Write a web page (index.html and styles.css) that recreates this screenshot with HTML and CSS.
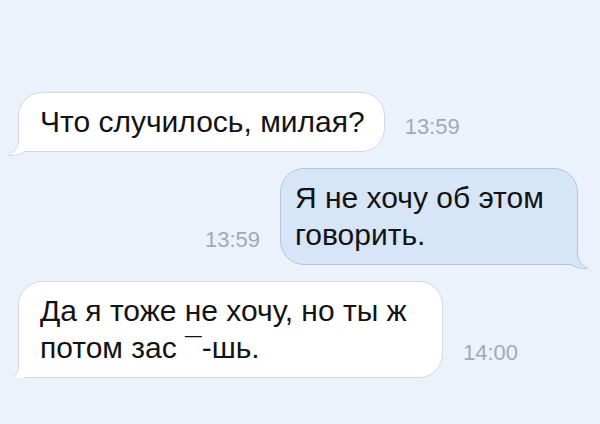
FILE: index.html
```html
<!DOCTYPE html>
<html lang="ru">

<head>
  <meta charset="UTF-8">
  <meta name="viewport" content="width=device-width, initial-scale=1.0">
  <title>Сообщения</title>
  <link rel="stylesheet" href="styles.css">
</head>

<body>
  <main class="chat">
    <div class="row">
      <div class="bubble bubble-in">
        Что случилось, милая?
        <svg class="tail" width="30" height="24" viewBox="0 0 30 24">
          <path class="tail-fill" d="M11.5 0 L11.5 8 C11.5 14 7 19 1.5 22.5 C8 23 14 21.5 18 18.5 L30 18.5 L30 0 Z" />
          <path class="tail-line" d="M11.5 0 L11.5 8 C11.5 14 7 19 1.5 22.5 C8 23 14 21.5 18 18.5 L30 18.5" />
        </svg>
      </div>
      <span class="time">13:59</span>
    </div>

    <div class="row row-out">
      <span class="time">13:59</span>
      <div class="bubble bubble-out">
        Я не хочу об этом говорить.
        <svg class="tail" width="30" height="24" viewBox="0 0 30 24">
          <path class="tail-fill" d="M11.5 0 L11.5 8 C11.5 14 7 19 1.5 22.5 C8 23 14 21.5 18 18.5 L30 18.5 L30 0 Z" />
          <path class="tail-line" d="M11.5 0 L11.5 8 C11.5 14 7 19 1.5 22.5 C8 23 14 21.5 18 18.5 L30 18.5" />
        </svg>
      </div>
    </div>

    <div class="row">
      <div class="bubble bubble-in">
        Да я тоже не хочу, но ты ж потом зас ¯-шь.
        <svg class="tail" width="30" height="24" viewBox="0 0 30 24">
          <path class="tail-fill" d="M11.5 0 L11.5 8 C11.5 14 7 19 1.5 22.5 C8 23 14 21.5 18 18.5 L30 18.5 L30 0 Z" />
          <path class="tail-line" d="M11.5 0 L11.5 8 C11.5 14 7 19 1.5 22.5 C8 23 14 21.5 18 18.5 L30 18.5" />
        </svg>
      </div>
      <span class="time">14:00</span>
    </div>
  </main>
</body>

</html>
```
FILE: styles.css
```css
body {
  margin: 0;
  padding: 0;
  background-color: #ecf2fc;
  font-family: "Liberation Sans", Arial, sans-serif;
}

.chat {
  display: flex;
  flex-direction: column;
  gap: 16px;
  padding: 92px 22px 0 18px;
}

.row {
  display: flex;
  align-items: flex-end;
  gap: 20px;
}

.row-out {
  justify-content: flex-end;
}

.bubble {
  position: relative;
  box-sizing: border-box;
  border: 1px solid #d4d9e1;
  border-radius: 24px;
  padding: 10px 19px 11px 21px;
  font-size: 30px;
  line-height: 37px;
  color: #131313;
  background-color: #ffffff;
}

.bubble-in {
  max-width: 425px;
  border-bottom-left-radius: 0;
}

.bubble-out {
  max-width: 298px;
  padding: 10px 25px 11px 14px;
  background-color: #d7e5f8;
  border-color: #b8c5d7;
  border-bottom-right-radius: 0;
}

/* хвостик пузыря */
.tail {
  position: absolute;
  left: -12px;
  bottom: -6px;
}

.bubble-out .tail {
  left: auto;
  right: -12px;
  transform: scaleX(-1);
}

.tail-fill {
  fill: #ffffff;
}

.tail-line {
  fill: none;
  stroke: #d4d9e1;
  stroke-width: 1;
}

.bubble-out .tail-fill {
  fill: #d7e5f8;
}

.bubble-out .tail-line {
  stroke: #b8c5d7;
}

.time {
  flex-shrink: 0;
  margin-bottom: 13px;
  font-size: 22px;
  line-height: 24px;
  color: #a5a9b0;
}
```
